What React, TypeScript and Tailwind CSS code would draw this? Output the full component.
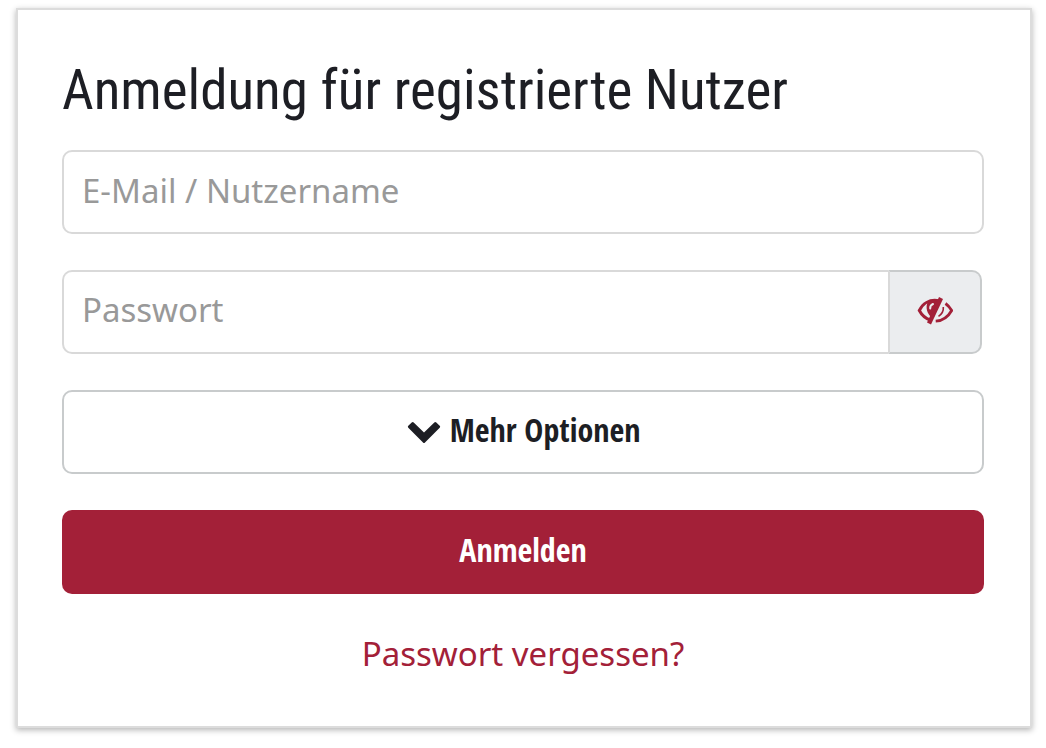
import React, { useState } from 'react';

const EyeSlashIcon: React.FC = () => (
  <svg className="h-9 w-9" viewBox="0 0 36 36" fill="none" stroke="currentColor" aria-hidden="true">
    <path d="M22 8.800C12 6.800 5.500 12 2.300 18.500c2.400 4.500 6 7.800 11 9.600" strokeWidth="3" />
    <path d="M12 8.500C8.500 12 8.500 20 14 25l2.500 1L24 8z" fill="currentColor" stroke="none" />
    <path d="M16 12c-2 .800-3 2.500-2.800 4.500" stroke="#ebedef" strokeWidth="2" strokeLinecap="round" />
    <path d="M24 6L12 31.500" strokeWidth="4.400" />
    <path d="M28.500 11.500c2.500 1.800 4.500 4.200 6.200 7-3.500 6.200-8.500 10.200-16 10.700" strokeWidth="2.800" />
    <path d="M26.300 15c.400 4-1.300 7-4.800 9.300" strokeWidth="1.600" />
  </svg>
);

const App: React.FC = () => {
  const [showPassword, setShowPassword] = useState(false);

  return (
    <main className="pl-4 pr-[14px] pt-2 pb-5 bg-white text-[#1d1e24] font-['Noto_Sans',sans-serif]">
      <form
        className="flex flex-col border-2 border-[#dcdcdc] bg-white pl-11 pr-[46px] pt-10 pb-12 shadow-[0_2px_6px_rgba(0,0,0,0.3)]"
        onSubmit={(e) => e.preventDefault()}
      >
        <h1 className="mb-5 text-[55px] leading-20 font-normal whitespace-nowrap font-['Roboto_Condensed',sans-serif]">
          Anmeldung für registrierte Nutzer
        </h1>

        <input
          type="text"
          aria-label="E-Mail / Nutzername"
          placeholder="E-Mail / Nutzername"
          className="mb-9 h-21 w-full rounded-[10px] border-2 border-[#d9d9d9] px-[18px] pb-1 text-[33px] placeholder:text-[#999]"
        />

        <div className="mb-9 flex h-21 pr-[2px]">
          <input
            type={showPassword ? 'text' : 'password'}
            aria-label="Passwort"
            placeholder="Passwort"
            className="min-w-0 flex-1 rounded-l-[10px] border-2 border-r-0 border-[#d9d9d9] px-[18px] pb-1 text-[33px] placeholder:text-[#999]"
          />
          <button
            type="button"
            aria-label="Passwort anzeigen"
            onClick={() => setShowPassword(!showPassword)}
            className="flex w-[94px] items-center justify-center rounded-r-[10px] border-2 border-l-[#d9d9d9] border-[#c8cbcc] bg-[#ebedef] pb-1 text-[#a32038]"
          >
            <EyeSlashIcon />
          </button>
        </div>

        <button
          type="button"
          className="mb-9 flex h-21 items-center justify-center gap-2 rounded-[10px] border-2 border-[#c8cbcc] pb-1 text-[32px] font-bold font-['Open_Sans_Condensed',sans-serif]"
        >
          <svg className="h-9 w-9" viewBox="0 0 36 36" fill="currentColor" aria-hidden="true">
            <path d="M2.300 13.800l3.400-3.400q1-1 2 0L18 20.400l10.300-10q1-1 2 0l3.400 3.400q1 1 0 2L19 30.400q-1 1-2 0L2.300 15.800q-1-1 0-2z" />
          </svg>
          Mehr Optionen
        </button>

        <button
          type="submit"
          className="mb-9 h-21 rounded-[10px] bg-[#a32038] pb-1 text-[32px] font-bold text-white font-['Open_Sans_Condensed',sans-serif]"
        >
          Anmelden
        </button>

        <a href="#passwort" className="self-center text-[33px] leading-12 text-[#a32038]">
          Passwort vergessen?
        </a>
      </form>
    </main>
  );
};

export default App;
